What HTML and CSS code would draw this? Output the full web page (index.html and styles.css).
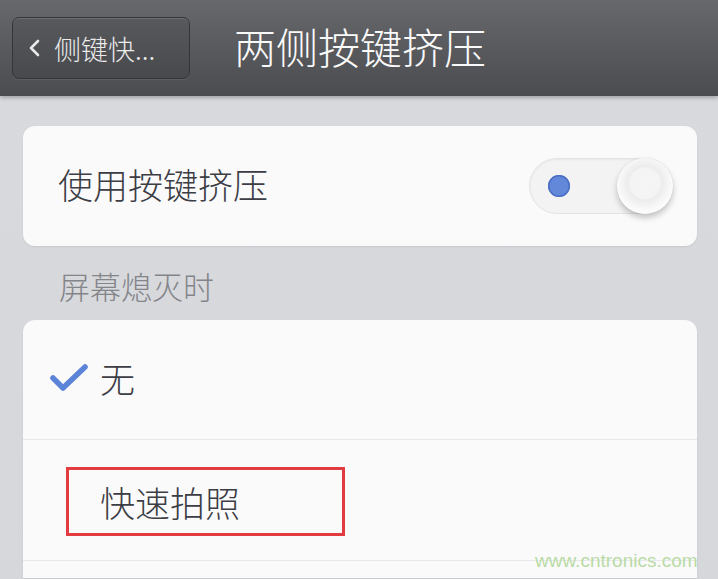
FILE: index.html
```html
<!DOCTYPE html>
<html lang="zh-CN">
<head>
<meta charset="UTF-8">
<meta name="viewport" content="width=device-width, initial-scale=1.0">
<title>两侧按键挤压</title>
<link rel="stylesheet" href="styles.css">
</head>
<body>
<div id="header">
    <div class="back-btn">
        <svg class="chev" width="14" height="18" viewBox="0 0 14 18">
            <path d="M10 2 L3 9 L10 16" fill="none" stroke="#e9e9ea" stroke-width="2.6" stroke-linecap="round" stroke-linejoin="round"/>
        </svg>
        <span>侧键快...</span>
    </div>
    <h1>两侧按键挤压</h1>
</div>

<div id="content">
    <div class="card switch-card">
        <span class="row-text">使用按键挤压</span>
        <div class="toggle">
            <span class="dot"></span>
            <span class="knob"></span>
        </div>
    </div>

    <div class="section-label">屏幕熄灭时</div>

    <div class="card list-card">
        <div class="list-row checked">
            <svg class="check" width="40" height="30" viewBox="0 0 40 30">
                <path d="M4 15 L14 25 L36 4" fill="none" stroke="#5b83d8" stroke-width="5.5" stroke-linecap="round" stroke-linejoin="round"/>
            </svg>
            <span class="row-text">无</span>
        </div>
        <div class="list-row">
            <div class="mark-box"><span class="row-text">快速拍照</span></div>
        </div>
        <div class="list-row last"></div>
    </div>
</div>

<div class="watermark">www.cntronics.com</div>
</body>
</html>
```

FILE: styles.css
```css
body {
    margin: 0;
    width: 718px;
    height: 579px;
    overflow: hidden;
    position: relative;
    font-family: "Noto Sans CJK SC", "Noto Sans", sans-serif;
    font-weight: 300;
    background: linear-gradient(#d9dadd, #d6d7db);
}
#header {
    height: 96px;
    display: flex;
    align-items: center;
    padding-left: 12px;
    background: linear-gradient(#67686c, #4b4c50);
    box-shadow: 0 2px 4px rgba(0, 0, 0, 0.25);
    position: relative;
}
.back-btn {
    width: 178px;
    height: 62px;
    box-sizing: border-box;
    border: 1.5px solid #343539;
    border-radius: 7px;
    background: linear-gradient(#58595d, #48494d);
    box-shadow: inset 0 1px 0 rgba(255, 255, 255, 0.12), 0 1px 0 rgba(255, 255, 255, 0.08);
    display: flex;
    align-items: center;
    padding-left: 15px;
    color: #ececec;
    font-size: 27px;
    line-height: 1;
}
.chev {
    margin-right: 12px;
}
h1 {
    margin: 0 0 4px 44px;
    color: #fafafa;
    font-size: 42px;
    font-weight: 300;
    line-height: 1;
}
#content {
    padding: 30px 21px 0 23px;
}
.card {
    background: #fafafa;
    border-radius: 12px;
    box-shadow: 0 1px 2px rgba(0, 0, 0, 0.08);
}
.row-text {
    font-size: 35px;
    line-height: 1;
    color: #3c3d45;
}
.switch-card {
    height: 120px;
    box-sizing: border-box;
    display: flex;
    align-items: center;
    justify-content: space-between;
    padding: 0 24px 0 35px;
}
.switch-card .row-text {
    margin-bottom: 6px;
}
.toggle {
    width: 144px;
    height: 56px;
    box-sizing: border-box;
    border-radius: 28px;
    background: #f3f3f4;
    border: 1px solid #e4e4e6;
    box-shadow: inset 0 1px 2px rgba(0, 0, 0, 0.05);
    display: flex;
    align-items: center;
    justify-content: space-between;
    padding-left: 18px;
}
.dot {
    width: 22px;
    height: 22px;
    border-radius: 50%;
    background: #6488d9;
    box-shadow: inset 0 0 0 1.5px #4b6fc4;
}
.knob {
    width: 56px;
    height: 56px;
    margin-right: -1px;
    border-radius: 50%;
    background: radial-gradient(circle at 50% 45%, #f6f6f6 0, #f4f4f4 15px, #ececec 17px, #fbfbfb 28px);
    box-shadow: 0 4px 6px rgba(0, 0, 0, 0.22), 0 0 1px rgba(0, 0, 0, 0.2);
}
.section-label {
    height: 74px;
    display: flex;
    align-items: center;
    padding: 4px 0 0 36px;
    box-sizing: border-box;
    font-size: 31px;
    line-height: 1;
    color: #84858a;
}
.list-card {
    border-radius: 12px 12px 0 0;
}
.list-row {
    height: 121px;
    box-sizing: border-box;
    border-bottom: 1px solid #e8e8ea;
    display: flex;
    align-items: center;
}
.list-row.checked {
    height: 120px;
    padding: 0 0 4px 26px;
}
.list-row.last {
    height: 17px;
    border-bottom: none;
}
.check {
    margin-right: 11px;
}
.list-row:nth-child(2) {
    padding: 2px 0 0 43px;
}
.mark-box {
    width: 279px;
    height: 69px;
    box-sizing: border-box;
    border: 3px solid #e23b40;
    display: flex;
    align-items: center;
    padding-left: 31px;
}
.watermark {
    position: absolute;
    left: 535px;
    top: 550px;
    font-family: "Liberation Sans", Arial, sans-serif;
    font-weight: normal;
    font-size: 19px;
    color: #b9dba6;
}
```
